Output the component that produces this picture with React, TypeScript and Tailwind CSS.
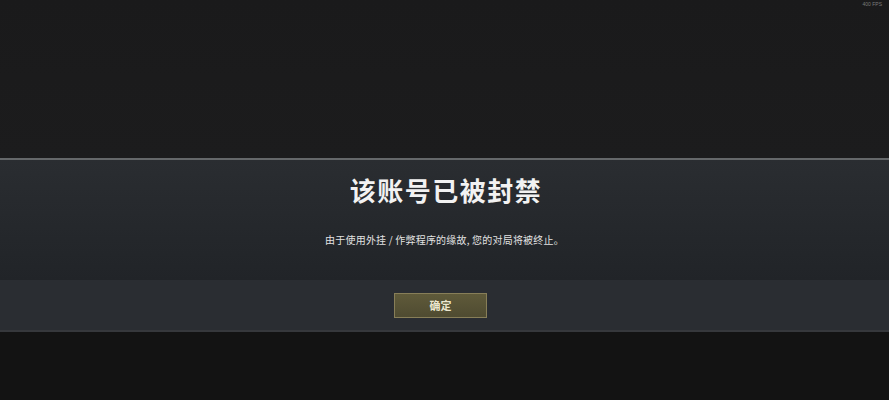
export default function App() {
  const cjk = { fontFamily: '"Noto Sans CJK SC", "Noto Sans", sans-serif' };
  return (
    <div className="relative w-[889px] h-[400px] overflow-hidden flex flex-col bg-[#1b1b1c]" style={cjk}>
      <div className="absolute right-[7px] top-[0px] text-[5px] leading-[8px] text-[#7a7a7a]" style={{ fontFamily: '"Liberation Sans", sans-serif' }}>
        400 FPS
      </div>
      <div className="h-[158px] shrink-0 bg-gradient-to-b from-[#1a1a1b] to-[#1c1c1d]" />
      <div className="h-[2px] shrink-0 bg-[#65686a]" />
      <div className="h-[120px] shrink-0 flex flex-col items-center bg-gradient-to-b from-[#2a2d31] to-[#212428]">
        <div className="mt-[12px] ml-[3px] text-[26px] leading-[36px] font-bold tracking-[1.5px] text-[#f2f2f2]">
          该账号已被封禁
        </div>
        <div className="mt-[24px] text-[10px] leading-[16px] tracking-[0.2px] text-[#e2e2e2]">
          由于使用外挂 / 作弊程序的缘故, 您的对局将被终止。
        </div>
      </div>
      <div className="h-[50px] shrink-0 flex items-center justify-center bg-[#2a2d32]">
        <div className="mr-[8px] w-[93px] h-[25px] border border-[#877e58] bg-gradient-to-b from-[#5f5a3a] to-[#4f4b31] flex items-center justify-center text-[11px] font-bold text-[#ece6cf]">
          确定
        </div>
      </div>
      <div className="h-[2px] shrink-0 bg-[#36383c]" />
      <div className="flex-1 bg-[#131313]" />
    </div>
  );
}
